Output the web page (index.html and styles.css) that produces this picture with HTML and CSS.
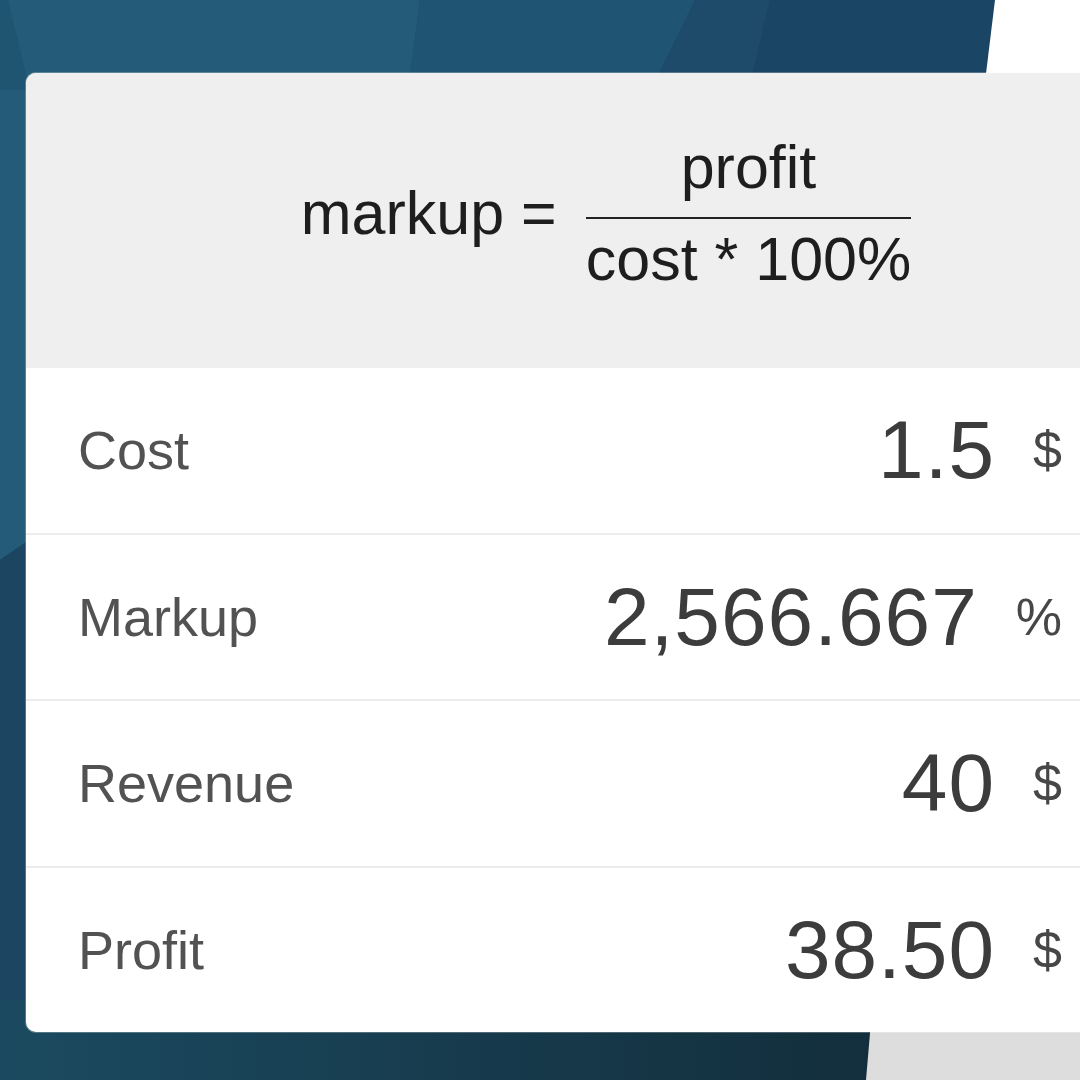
FILE: index.html
```html
<!DOCTYPE html>
<html lang="en">
<head>
    <meta charset="UTF-8">
    <meta name="viewport" content="width=device-width, initial-scale=1.0">
    <title>Markup Calculator</title>
    <link rel="stylesheet" href="styles.css">
</head>
<body>
    <!-- desktop wallpaper and the edges of other windows -->
    <div class="wallpaper">
        <svg viewBox="0 0 1080 1080" preserveAspectRatio="none">
            <defs>
                <linearGradient id="bottomShade" x1="0" y1="0" x2="1" y2="0">
                    <stop offset="0" stop-color="#1b4a60"/>
                    <stop offset="1" stop-color="#132e3c"/>
                </linearGradient>
            </defs>
            <rect width="1080" height="1080" fill="#1b4560"/>
            <polygon points="0,0 420,0 380,300 0,560" fill="#235b78"/>
            <polygon points="0,0 8,0 30,90 0,90" fill="#1f5570"/>
            <polygon points="420,0 695,0 500,400 380,300" fill="#1f5573"/>
            <polygon points="695,0 770,0 700,300 500,400" fill="#1d4b69"/>
            <polygon points="770,0 1000,0 985,200 700,300" fill="#1b4564"/>
            <polygon points="0,560 380,300 600,1080 0,1080" fill="#1b4560"/>
            <rect x="0" y="1000" width="880" height="80" fill="url(#bottomShade)"/>
            <polygon points="995,0 1080,0 1080,90 984,90" fill="#ffffff"/>
            <polygon points="872,1010 1080,1010 1080,1080 866,1080" fill="#dddddd"/>
        </svg>
    </div>

    <div class="window">
        <div class="formula">
            <span class="lhs">markup =</span>
            <div class="fraction">
                <span class="num">profit</span>
                <span class="den">cost * 100%</span>
            </div>
        </div>

        <div class="rows">
            <div class="row">
                <span class="label">Cost</span>
                <span class="value">1.5</span>
                <span class="unit">$</span>
            </div>
            <div class="row">
                <span class="label">Markup</span>
                <span class="value">2,566.667</span>
                <span class="unit">%</span>
            </div>
            <div class="row">
                <span class="label">Revenue</span>
                <span class="value">40</span>
                <span class="unit">$</span>
            </div>
            <div class="row">
                <span class="label">Profit</span>
                <span class="value">38.50</span>
                <span class="unit">$</span>
            </div>
        </div>
    </div>
</body>
</html>
```

FILE: styles.css
```css
html, body {
    margin: 0;
    height: 100%;
    overflow: hidden;
}

body {
    font-family: "Liberation Sans", Arial, sans-serif;
    background-color: #1b4560;
    padding: 73px 0 0 26px;
    box-sizing: border-box;
}

.wallpaper {
    position: fixed;
    inset: 0;
    z-index: -1;
}

.wallpaper svg {
    display: block;
    width: 100%;
    height: 100%;
}

.window {
    width: 1084px;
    height: 959px;
    display: flex;
    flex-direction: column;
    background-color: #fff;
    border-radius: 10px;
    overflow: hidden;
    box-shadow: 0 0 0 1px rgba(255, 255, 255, 0.25);
}

.formula {
    height: 295px;
    flex: none;
    box-sizing: border-box;
    padding: 0 0 15px 78px;
    display: flex;
    align-items: center;
    justify-content: center;
    background-color: #efefef;
    color: #1e1e1e;
    font-size: 61px;
    line-height: 70px;
}

.lhs {
    margin-right: 27px;
}

.fraction {
    display: flex;
    flex-direction: column;
    align-items: center;
    padding: 0 2px;
}

.num {
    align-self: stretch;
    text-align: center;
    padding-bottom: 15px;
    border-bottom: 2px solid #222;
}

.den {
    margin-top: 5px;
}

.rows {
    flex: 1;
    display: flex;
    flex-direction: column;
}

.row {
    flex: 1;
    display: flex;
    align-items: center;
    padding: 0 48px 0 52px;
    border-top: 2px solid #ececec;
}

.row:first-child {
    border-top: none;
}

.label {
    font-size: 54px;
    color: #525252;
}

.value {
    margin-left: auto;
    font-size: 82px;
    letter-spacing: 1px;
    color: #3c3c3c;
}

.unit {
    margin-left: 38px;
    font-size: 52px;
    color: #474747;
}
```
